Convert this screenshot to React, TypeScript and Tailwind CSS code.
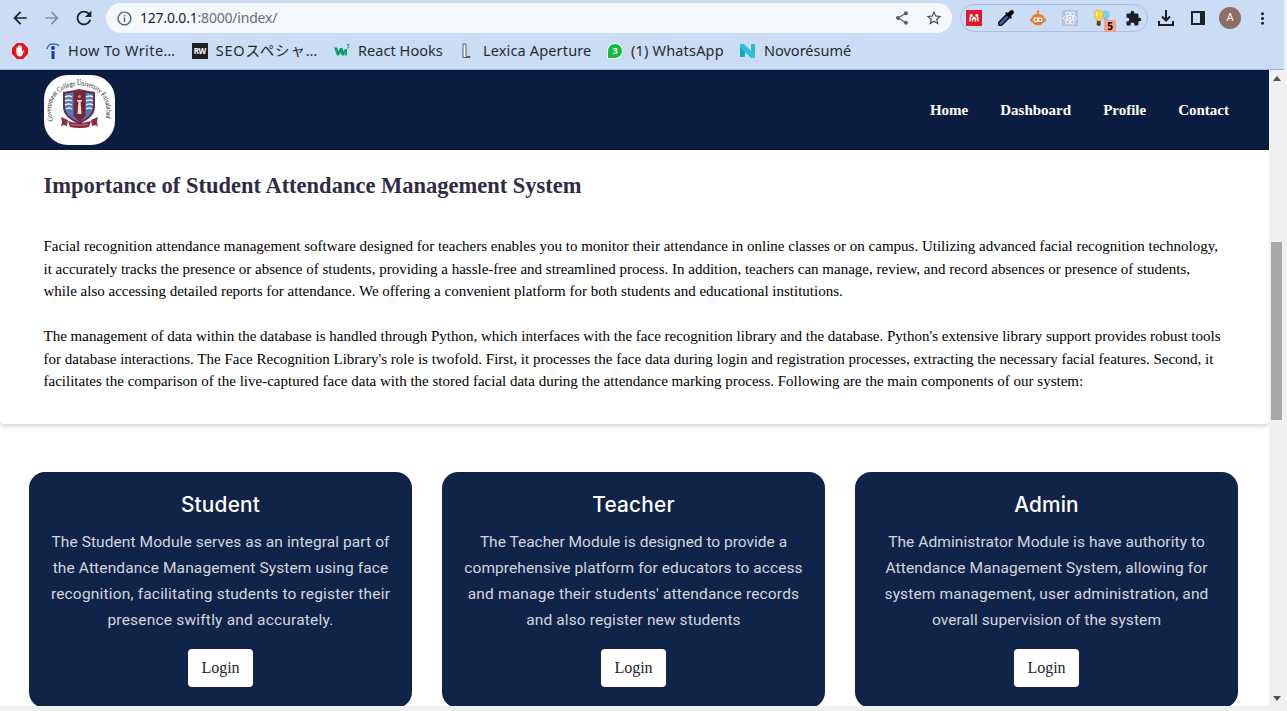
import React from "react";
import {
  MdArrowBack,
  MdArrowForward,
  MdRefresh,
  MdInfoOutline,
  MdShare,
  MdStarBorder,
  MdExtension,
  MdMoreVert,
} from "react-icons/md";

const ui = "font-['Noto_Sans','Noto_Sans_CJK_JP',sans-serif]";

function Icon({ box, children, className }: { box: string; children: React.ReactNode; className: string }) {
  return (
    <svg viewBox={box} className={`block shrink-0 ${className}`} aria-hidden="true">
      {children}
    </svg>
  );
}

function Toolbar() {
  return (
    <div className="flex h-9 items-center">
      <MdArrowBack className="ml-[10px] size-5 shrink-0 text-[#1c2128]" />
      <MdArrowForward className="ml-3 size-5 shrink-0 text-[#8390a5]" />
      <MdRefresh className="ml-[11px] size-[22px] shrink-0 text-[#1c2128]" />
      <div className="ml-[11px] flex h-[30px] w-[846px] shrink-0 items-center rounded-full bg-[#f4f8fd]">
        <MdInfoOutline className="ml-[10px] size-[17px] text-[#5a5f66]" />
        <div className="ml-[7px] w-[200px] text-[14px] leading-5 whitespace-nowrap text-[#6a6e75]">
          <span className="tracking-[-0.2px] text-[#1f2328]">127.0.0.1</span>
          <span className="tracking-[-0.2px]">:8000/index/</span>
        </div>
        <MdShare className="ml-auto size-4 text-[#5a5f66]" />
        <MdStarBorder className="mr-[9px] ml-[15px] size-[18px] text-[#4c5157]" />
      </div>
      <div className="ml-2 flex h-7 w-[188px] shrink-0 items-center rounded-full border border-[#b0bfdf] pl-[5px]">
        <Icon box="0 0 16 16" className="size-4">
          <rect width="16" height="16" fill="#e0182d" />
          <circle cx="5.200" cy="5.500" r="1.500" fill="#fff" />
          <circle cx="10.800" cy="5.500" r="1.500" fill="#fff" />
          <circle cx="8" cy="8" r="1.500" fill="#fff" />
          <path d="M3.700 11.500 4.400 6M12.300 11.500 11.600 6M6.500 11.500 6.200 8M9.500 11.500 9.800 8" fill="none" stroke="#fff" strokeWidth="1.400" />
        </Icon>
        <Icon box="0 0 16 16" className="ml-4 size-4">
          <path d="M8.500 4.500 11.500 7.500 4 15Q1.800 16 1 15T1 12z" fill="#4a55ad" stroke="#06070c" strokeWidth="1.300" />
          <path d="m7 3 1.500-1 1.300 1L12 .8q2-1.500 3.300-.1t0 3L13 6l1 1.500L12.700 9z" fill="#06070c" />
        </Icon>
        <Icon box="0 0 16 16" className="ml-4 size-4">
          <circle cx="8" cy="1.800" r="1.300" fill="#e37e31" />
          <path d="M8 2v3" stroke="#e37e31" />
          <ellipse cx="8" cy="9.500" rx="6.500" ry="6" fill="#e37e31" />
          <rect y="8" width="16" height="4" rx="2" fill="#e37e31" />
          <rect x="3.300" y="7.500" width="9.400" height="4.600" rx="2.300" fill="#fff3e4" />
          <circle cx="5.900" cy="9.800" r="1" fill="#98501b" />
          <circle cx="10.100" cy="9.800" r="1" fill="#98501b" />
        </Icon>
        <Icon box="0 0 16 16" className="ml-4 size-4">
          <rect width="16" height="16" fill="#b5c3dc" />
          <g fill="none" stroke="#f4f7ff" strokeWidth=".9">
            <ellipse cx="8" cy="8" rx="6.700" ry="2.600" />
            <ellipse cx="8" cy="8" rx="6.700" ry="2.600" transform="rotate(60 8 8)" />
            <ellipse cx="8" cy="8" rx="6.700" ry="2.600" transform="rotate(120 8 8)" />
          </g>
          <circle cx="8" cy="8" r="1.300" fill="#fff" />
        </Icon>
        <div className="relative ml-4 size-4">
          <Icon box="0 0 16 16" className="size-4">
            <circle cx="11.700" cy="4.700" r="4.200" fill="#7fd0ee" />
            <path d="M9.500 8h4v5h-3z" fill="#91b6d2" />
            <path d="M4.500 0C1.800 0 0 2 0 4.500 0 7 2.300 8.500 2.700 11h4c.5-2.500 2.600-4 2.600-6.500C9.300 2 7.500 0 4.500 0" fill="#ffd33a" stroke="#c79b1c" strokeWidth=".4" />
            <path d="M3 2.500Q1.800 4 3 6" fill="none" stroke="#fff8c8" strokeWidth="1.400" />
            <path d="M2.700 11h4v3.500L5.700 16h-2l-1-1.500z" fill="#454d3f" />
          </Icon>
          <span className="absolute top-[10px] left-[10px] flex h-3 w-3 items-center justify-center bg-[#f8a183] text-[10px] leading-none font-bold text-black">
            5
          </span>
        </div>
        <MdExtension className="ml-[15px] size-[17px] text-[#1c2128]" />
      </div>
      <Icon box="0 0 16 16" className="ml-[10px] size-4">
        <path d="M8 0v10M4 6.500 8 10.500l4-4M1 11v4h14v-4" fill="none" stroke="#1c2128" strokeWidth="2" />
      </Icon>
      <Icon box="0 0 14 14" className="ml-[17px] size-[14px]">
        <path d="M1 1h12v12H1z" fill="none" stroke="#1c2128" strokeWidth="2" />
        <path d="M9 1h4v12H9z" fill="#1c2128" />
      </Icon>
      <div className="ml-[14px] flex size-[22px] shrink-0 items-center justify-center rounded-full bg-[#8d6e63] font-[Roboto,sans-serif] text-[11px] text-white">
        A
      </div>
      <MdMoreVert className="ml-3 size-[19px] shrink-0 text-[#1c2128]" />
    </div>
  );
}

function Bookmark({ icon, label, className, text }: { icon: React.ReactNode; label: string; className: string; text: string }) {
  return (
    <div className={`flex shrink-0 items-center ${className}`}>
      {icon}
      <span className={`pb-[2px] whitespace-nowrap ${text}`}>{label}</span>
    </div>
  );
}

function Bookmarks() {
  return (
    <div className="flex h-[30px] items-center pl-3 text-[14.5px] leading-5 text-[#252b34]">
      <Icon box="0 0 16 16" className="size-4">
        <path d="M5 0h6l5 5v6l-5 5H5l-5-5V5z" fill="#e9121b" />
        <path d="M4.300 8.500V5q.7-.9 1.300 0V3.300q.8-.9 1.500 0v-.7q.8-.9 1.500 0v1q.8-.7 1.500.2v5l1.300-1.500q1-.3 1 .4L10.200 12q-1 1.700-3 1.500-2.900-.5-2.900-5" fill="#fff" />
      </Icon>
      <Bookmark
        className="ml-[18px] w-[130px]"
        text="ml-2 tracking-[0.42px]"
        label="How To Write…"
        icon={
          <Icon box="0 0 14 16" className="h-4 w-[14px]">
            <path d="M1 6Q2 1 7 1t6 2" fill="none" stroke="#4770c3" strokeWidth="1.400" />
            <circle cx="7" cy="5" r="2" fill="#163f9d" />
            <path d="M5.500 8h3v8h-3z" fill="#163f9d" />
          </Icon>
        }
      />
      <Bookmark
        className="ml-4 w-[126px]"
        text="ml-2 tracking-[0.82px]"
        label="SEOスペシャ…"
        icon={
          <div className="flex size-4 items-center justify-center bg-[#202124] text-[8px] font-bold tracking-[-0.4px] text-white">RW</div>
        }
      />
      <Bookmark
        className="ml-4 w-[109px]"
        text="ml-2 tracking-[0.05px]"
        label="React Hooks"
        icon={
          <Icon box="0 0 16 16" className="size-4">
            <path d="M0 4.500h3l1.700 4L6 5h2.300l1.500 3.500 1-2.500h2.200v6.500h-1.800V9.500l-1.200 3H8L6.500 9.500 5 12.500H3z" fill="#0f9b66" />
            <path d="M12.800 1.500h2L13.800 3q1.500 0 1 1.400t-2 .4" fill="none" stroke="#0f9b66" strokeWidth=".9" />
          </Icon>
        }
      />
      <Bookmark
        className="ml-4 w-[132px]"
        text="ml-2 tracking-[0.15px]"
        label="Lexica Aperture"
        icon={
          <Icon box="0 0 16 16" className="size-4">
            <path d="M4 1h3v12h4v1.500H4z" fill="#fff" />
            <path d="M7 1v12.500h4v1H4V1h3" fill="none" stroke="#53585f" strokeWidth="1" />
          </Icon>
        }
      />
      <Bookmark
        className="ml-4 w-[117px]"
        text="ml-2 tracking-[0.18px]"
        label="(1) WhatsApp"
        icon={
          <div className="flex size-4 items-center justify-center rounded-full rounded-bl-[3px] border border-white bg-[#16b83f] text-[9px] font-bold text-white">3</div>
        }
      />
      <Bookmark
        className="ml-4"
        text="ml-2"
        label="Novorésumé"
        icon={
          <Icon box="0 0 16 16" className="size-4">
            <path d="M0 2q0-1 1-1l4 3v10H0z" fill="#18a7c3" />
            <path d="M11 1h3q1 0 1 1v12q0 1-1 1l-3-4z" fill="#29bad2" />
            <path d="M0 1h4l11 11v2q0 1-1 1h-3L0 4z" fill="#31bfd9" />
          </Icon>
        }
      />
    </div>
  );
}

function Crest() {
  return (
    <div className="h-[70px] w-[71px] overflow-hidden rounded-[24px] bg-white">
      <Icon box="0 0 71 70" className="h-[70px] w-[71px]">
        <defs>
          <path id="crest-arc" d="M9 46C1 22 19 10.500 35 10.500S68 22 61 47L59 54" />
        </defs>
        <text fontFamily="Liberation Serif, serif" fontSize="7.200" fill="#111">
          <textPath href="#crest-arc" textLength="102" lengthAdjust="spacingAndGlyphs">
            Government College University Faisalabad
          </textPath>
        </text>
        <path d="M19 17q8-1 16-3 8 2 16 3v15c0 8-7 13-16 17-9-4-16-9-16-17z" fill="#75283d" />
        <path d="M21 19q6-1 14-3 8 2 14 3v13c0 7-6 11-14 15C27 43 21 39 21 32z" fill="#4a7fb9" />
        <path
          d="M21 22q4-2 7 0M21 26q4-2 7 0M21 30q4-2 7 0M22 34q3-2 6 0M42 22q4-2 7 0M42 26q4-2 7 0M42 30q4-2 7 0M42 34q3-2 6 0"
          fill="none"
          stroke="#e4edf6"
          strokeWidth="1.500"
        />
        <path d="M29.500 17q6-2 12 0v24l-6 6-6-6z" fill="#7a2439" />
        <path d="M34.500 26h2l1 13h-4zM33 25h5v1.500h-5z" fill="#eadfd9" />
        <circle cx="35.500" cy="21.500" r="1.500" fill="#d9854a" />
        <path d="m17 42 7 3-1 6-4-1-2 2 1-5zM54 42l-7 3 1 6 4-1 2 2-1-5z" fill="#8b3044" />
        <path d="M24 46q11 4 23 0l-2 6q-9 2-19 0z" fill="#852b3f" />
        <path d="M27 49.500q9 1.500 17 0" fill="none" stroke="#dca8ad" strokeWidth=".7" />
      </Icon>
    </div>
  );
}

type Module = { title: string; lines: { text: string; tracking: string }[] };

const modules: Module[] = [
  {
    title: "Student",
    lines: [
      { text: "The Student Module serves as an integral part of", tracking: "tracking-[0.085px]" },
      { text: "the Attendance Management System using face", tracking: "tracking-[0.12px]" },
      { text: "recognition, facilitating students to register their", tracking: "tracking-[0.18px]" },
      { text: "presence swiftly and accurately.", tracking: "tracking-[0.2px]" },
    ],
  },
  {
    title: "Teacher",
    lines: [
      { text: "The Teacher Module is designed to provide a", tracking: "tracking-normal" },
      { text: "comprehensive platform for educators to access", tracking: "tracking-[0.08px]" },
      { text: "and manage their students' attendance records", tracking: "tracking-[0.16px]" },
      { text: "and also register new students", tracking: "tracking-[0.11px]" },
    ],
  },
  {
    title: "Admin",
    lines: [
      { text: "The Administrator Module is have authority to", tracking: "tracking-[0.07px]" },
      { text: "Attendance Management System, allowing for", tracking: "tracking-[0.12px]" },
      { text: "system management, user administration, and", tracking: "tracking-[0.13px]" },
      { text: "overall supervision of the system", tracking: "tracking-[0.09px]" },
    ],
  },
];

function ModuleCard({ title, lines }: Module) {
  return (
    <article className="flex h-[236px] w-[383px] shrink-0 flex-col items-center rounded-[16px] bg-[#10244a] pt-[18px]">
      <h3 className="font-[Inter,sans-serif] text-[20.8px] leading-[30px] font-medium tracking-[0.2px] text-white">{title}</h3>
      <p className="mt-[9px] text-center font-[Roboto,sans-serif] text-[15.5px] leading-[26px] text-[#d3d6dd]">
        {lines.map((line) => (
          <span key={line.text} className={`block whitespace-nowrap ${line.tracking}`}>
            {line.text}
          </span>
        ))}
      </p>
      <button className="mt-4 h-[38px] w-[64.4px] rounded-[4px] bg-white text-base text-[#212529]">Login</button>
    </article>
  );
}

export default function App() {
  return (
    <div className="flex h-[711px] w-[1287px] flex-col overflow-hidden bg-[#f0f0f0]">
      <div className={`h-[70px] w-[1284px] shrink-0 border-b border-[#9fb2d1] bg-[#cbdcf5] ${ui}`}>
        <Toolbar />
        <Bookmarks />
      </div>
      <div className="flex h-[636px] shrink-0">
        <main className="h-full w-[1269px] shrink-0 overflow-hidden bg-white font-['Liberation_Serif',serif]">
          <header className="flex h-20 items-center justify-between bg-[#0a1c3f] pr-10 pl-11">
            <Crest />
            <nav className="flex gap-8 text-[15px] leading-6 font-bold text-white">
              <a>Home</a>
              <a>Dashboard</a>
              <a>Profile</a>
              <a>Contact</a>
            </nav>
          </header>
          <section className="h-[274px] rounded-b-[4px] px-[43.5px] pt-[19px] shadow-[0_2px_5px_rgba(0,0,0,0.18)]">
            <h2 className="text-[22.5px] leading-[34px] font-bold text-[#302c45]">Importance of Student Attendance Management System</h2>
            <p className="mt-8 text-[15px] leading-[22.5px] whitespace-nowrap text-black">
              Facial recognition attendance management software designed for teachers enables you to monitor their attendance in online classes or on campus. Utilizing advanced facial recognition technology,
              <br />
              it accurately tracks the presence or absence of students, providing a hassle-free and streamlined process. In addition, teachers can manage, review, and record absences or presence of students,
              <br />
              while also accessing detailed reports for attendance. We offering a convenient platform for both students and educational institutions.
            </p>
            <p className="mt-[22.5px] text-[15px] leading-[22.5px] whitespace-nowrap text-black">
              The management of data within the database is handled through Python, which interfaces with the face recognition library and the database. Python's extensive library support provides robust tools
              <br />
              for database interactions. The Face Recognition Library's role is twofold. First, it processes the face data during login and registration processes, extracting the necessary facial features. Second, it
              <br />
              facilitates the comparison of the live-captured face data with the stored facial data during the attendance marking process. Following are the main components of our system:
            </p>
          </section>
          <section className="flex gap-[30px] pt-12 pl-[29px]">
            {modules.map((m) => (
              <ModuleCard key={m.title} {...m} />
            ))}
          </section>
        </main>
        <div className="flex h-full w-[15px] flex-col items-center bg-[#f0f0f0] pt-[6px] pb-[5px]">
          <Icon box="0 0 8 5" className="h-[5px] w-2">
            <path d="M0 5 4 0l4 5z" fill="#505050" />
          </Icon>
          <div className="mt-[161px] h-[178px] w-[11px] bg-[#a8a8a8]" />
          <Icon box="0 0 8 5" className="mt-auto h-[5px] w-2">
            <path d="M0 0h8L4 5z" fill="#505050" />
          </Icon>
        </div>
      </div>
    </div>
  );
}
